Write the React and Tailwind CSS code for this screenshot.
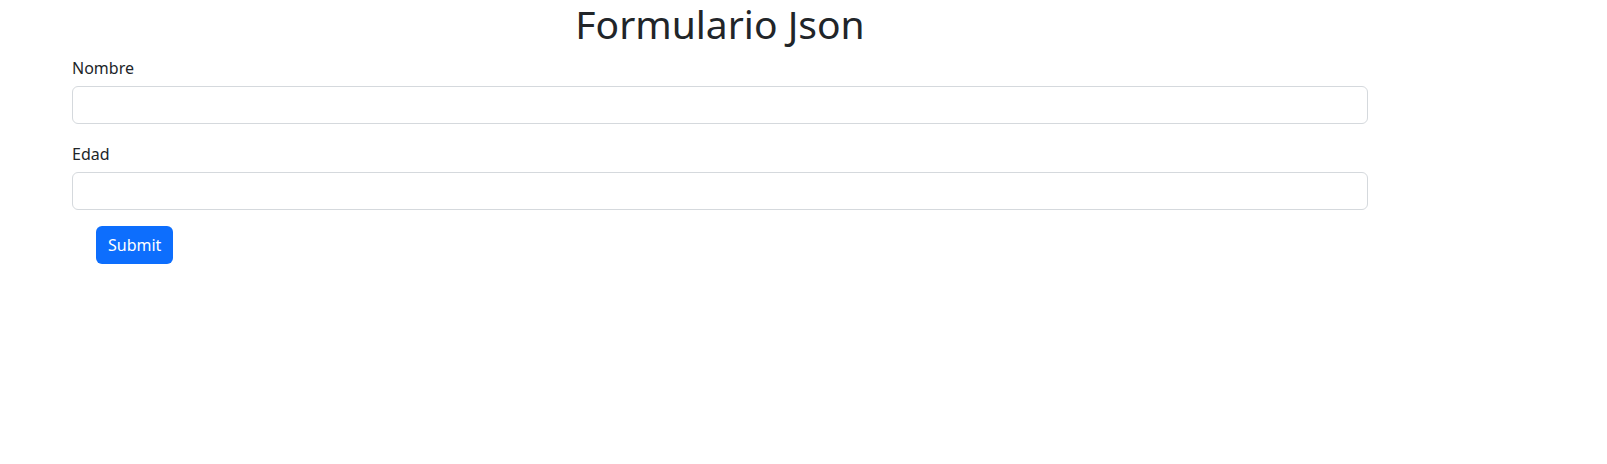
import React, { useState } from 'react';

const App = () => {
    const [form, setForm] = useState({ nombre: '', edad: '' });

    const handleChange = (e) => setForm({ ...form, [e.target.name]: e.target.value });

    const handleSubmit = (e) => {
        e.preventDefault();
        console.log(JSON.stringify(form));
    };

    return (
        <div className="min-h-[464px] bg-white text-[#212529] font-['Noto_Sans',sans-serif]">
            <div className="ml-[72px] w-[1296px]">
                <h1 className="text-center text-[39px] leading-[48px] font-normal">Formulario Json</h1>

                <form onSubmit={handleSubmit} className="pt-[6px]">
                    <div className="mb-4">
                        <label className="block pt-[2px] mb-[6px] text-[16px] leading-6">Nombre</label>
                        <input
                            name="nombre"
                            value={form.nombre}
                            onChange={handleChange}
                            className="block w-full h-[38px] px-3 border border-[#d5d9dd] rounded-[6px] outline-none"
                        />
                    </div>
                    <div className="mb-4">
                        <label className="block pt-[2px] mb-[6px] text-[16px] leading-6">Edad</label>
                        <input
                            name="edad"
                            value={form.edad}
                            onChange={handleChange}
                            className="block w-full h-[38px] px-3 border border-[#d5d9dd] rounded-[6px] outline-none"
                        />
                    </div>
                    <div className="pl-6">
                        <button type="submit" className="h-[38px] px-3 bg-[#0d6efd] text-white text-[16px] rounded-[6px]">
                            Submit
                        </button>
                    </div>
                </form>
            </div>
        </div>
    );
};

export default App;
